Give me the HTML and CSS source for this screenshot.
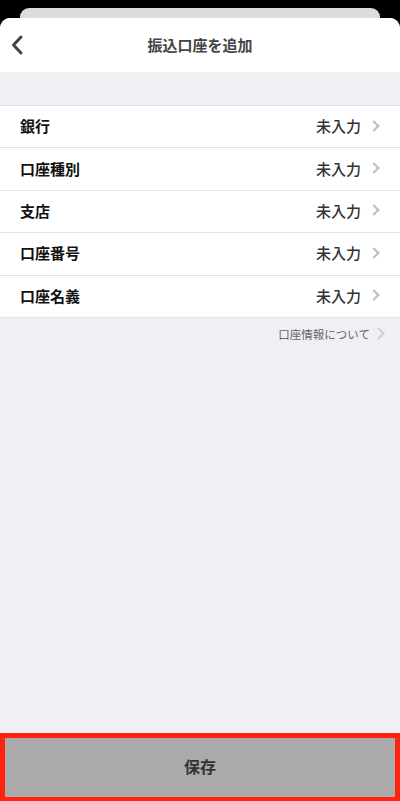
FILE: index.html
```html
<!DOCTYPE html>
<html lang="ja">
<head>
  <meta charset="UTF-8">
  <title>振込口座を追加</title>
  <link rel="stylesheet" href="styles.css">
</head>
<body>
  <div class="screen">
    <div class="back-card"></div>

    <div class="sheet">
      <header class="nav">
        <button class="nav-back" aria-label="戻る">
          <svg width="14" height="22" viewBox="0 0 14 22">
            <path d="M11 3 L3.5 11 L11 19" fill="none" stroke="#444" stroke-width="3" stroke-linecap="round" stroke-linejoin="round"/>
          </svg>
        </button>
        <h1 class="nav-title">振込口座を追加</h1>
      </header>

      <main class="content">
        <ul class="list">
          <li class="row"><span class="row-label">銀行</span><span class="row-value">未入力</span><span class="chev"></span></li>
          <li class="row"><span class="row-label">口座種別</span><span class="row-value">未入力</span><span class="chev"></span></li>
          <li class="row"><span class="row-label">支店</span><span class="row-value">未入力</span><span class="chev"></span></li>
          <li class="row"><span class="row-label">口座番号</span><span class="row-value">未入力</span><span class="chev"></span></li>
          <li class="row"><span class="row-label">口座名義</span><span class="row-value">未入力</span><span class="chev"></span></li>
        </ul>

        <a class="info-link" href="#">口座情報について<span class="chev chev-small"></span></a>
      </main>

      <footer class="save-bar">
        <button class="save-btn">保存</button>
      </footer>
    </div>
  </div>
</body>
</html>
```

FILE: styles.css
```css
* {
  box-sizing: border-box;
}
body {
  margin: 0;
  background: #000;
  font-family: "Noto Sans CJK JP", "Noto Sans", sans-serif;
  color: #111;
}
.screen {
  height: 801px;
  display: flex;
  flex-direction: column;
  padding-top: 8px;
}
.back-card {
  height: 20px;
  margin: 0 20px -10px;
  background: #dcdcdc;
  border-radius: 9px 9px 0 0;
}
.sheet {
  flex: 1;
  display: flex;
  flex-direction: column;
  background: #efeff4;
  border-radius: 10px 10px 0 0;
  overflow: hidden;
}
.nav {
  height: 54px;
  background: #fff;
  display: flex;
  align-items: center;
  justify-content: center;
  position: relative;
  padding-bottom: 2px;
}
.nav-back {
  position: absolute;
  left: 10px;
  top: 16px;
  border: none;
  background: none;
  padding: 0;
  line-height: 0;
}
.nav-title {
  margin: 0;
  font-size: 15px;
  font-weight: 700;
  color: #444;
}
.content {
  flex: 1;
  padding-top: 33px;
}
.list {
  list-style: none;
  margin: 0;
  padding: 0;
  background: #fff;
  border-top: 1px solid #e2e2e6;
}
.row {
  height: 42.4px;
  display: flex;
  align-items: center;
  padding: 0 22px 2px 20px;
  border-bottom: 1px solid #e2e2e6;
}
.row-label {
  flex: 1;
  font-size: 15px;
  font-weight: 700;
  color: #111;
}
.row-value {
  font-size: 15px;
  font-weight: 500;
  color: #333;
  margin-right: 13px;
}
.chev {
  width: 8px;
  height: 8px;
  border-top: 2px solid #bdbdbd;
  border-right: 2px solid #bdbdbd;
  transform: rotate(45deg);
  margin-left: -4px;
}
.info-link {
  display: flex;
  align-items: center;
  justify-content: flex-end;
  padding: 8px 17px 0 0;
  font-size: 11.5px;
  color: #666;
  text-decoration: none;
}
.chev-small {
  width: 9px;
  height: 9px;
  border-color: #d0d0d0;
  margin-left: 4px;
}
.save-bar {
  height: 68px;
  background: #fff;
}
.save-btn {
  width: 100%;
  height: 100%;
  border: 5px solid #ff2211;
  border-bottom-width: 4px;
  background: #aaa;
  font-family: inherit;
  font-size: 16px;
  font-weight: 700;
  color: #333;
  padding: 0 0 4px;
}
```
